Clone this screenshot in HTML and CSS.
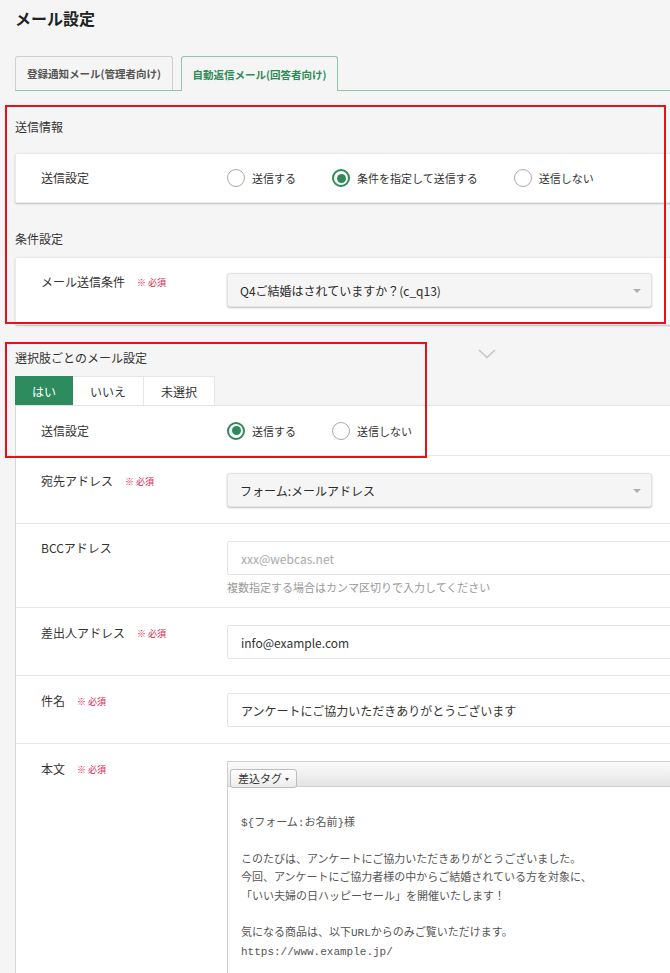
FILE: index.html
```html
<!DOCTYPE html>
<html lang="ja">
<head>
<meta charset="utf-8">
<title>メール設定</title>
<link rel="stylesheet" href="styles.css">
</head>
<body>
<div class="page">
  <h1 class="title">メール設定</h1>
  <div class="tabs">
    <div class="tab">登録通知メール(管理者向け)</div>
    <div class="tab active">自動返信メール(回答者向け)</div>
  </div>

  <h2 class="sec-head sec-first">送信情報</h2>
  <div class="card card-radio">
    <div class="label">送信設定</div>
    <div class="radios">
      <span class="radio"><span class="dot"></span>送信する</span>
      <span class="radio checked"><span class="dot"></span>条件を指定して送信する</span>
      <span class="radio"><span class="dot"></span>送信しない</span>
    </div>
  </div>

  <h2 class="sec-head sec-second">条件設定</h2>
  <div class="card card-field">
    <div class="label">メール送信条件<span class="req">※ 必須</span></div>
    <div class="field">
      <div class="select">Q4ご結婚はされていますか？(c_q13)<span class="caret"></span></div>
    </div>
  </div>

  <div class="sec-head-row">
    <h2 class="sec-head">選択肢ごとのメール設定</h2>
    <svg class="chevron" width="18" height="10" viewBox="0 0 18 10"><polyline points="1,1 9,8.5 17,1" fill="none" stroke="#c4c4c4" stroke-width="1.4"/></svg>
  </div>
  <div class="choice-tabs">
    <div class="ctab on">はい</div>
    <div class="ctab">いいえ</div>
    <div class="ctab">未選択</div>
  </div>

  <div class="panel">
    <div class="row row-radio">
      <div class="label">送信設定</div>
      <div class="radios">
        <span class="radio checked"><span class="dot"></span>送信する</span>
        <span class="radio"><span class="dot"></span>送信しない</span>
      </div>
    </div>
    <div class="row">
      <div class="label">宛先アドレス<span class="req">※ 必須</span></div>
      <div class="field">
        <div class="select">フォーム:メールアドレス<span class="caret"></span></div>
      </div>
    </div>
    <div class="row row-bcc">
      <div class="label">BCCアドレス</div>
      <div class="field">
        <div class="input placeholder">xxx@webcas.net</div>
        <div class="help">複数指定する場合はカンマ区切りで入力してください</div>
      </div>
    </div>
    <div class="row">
      <div class="label">差出人アドレス<span class="req">※ 必須</span></div>
      <div class="field">
        <div class="input">info@example.com</div>
      </div>
    </div>
    <div class="row">
      <div class="label">件名<span class="req">※ 必須</span></div>
      <div class="field">
        <div class="input">アンケートにご協力いただきありがとうございます</div>
      </div>
    </div>
    <div class="row row-body">
      <div class="label">本文<span class="req">※ 必須</span></div>
      <div class="field">
        <div class="editor">
          <div class="toolbar"><span class="tool-btn">差込タグ<span class="tool-caret"></span></span></div>
          <div class="editor-body">
            <div class="line">${フォーム:お名前}様</div>
            <div class="line">&nbsp;</div>
            <div class="line">このたびは、アンケートにご協力いただきありがとうございました。</div>
            <div class="line">今回、アンケートにご協力者様の中からご結婚されている方を対象に、</div>
            <div class="line">「いい夫婦の日ハッピーセール」を開催いたします！</div>
            <div class="line">&nbsp;</div>
            <div class="line">気になる商品は、以下URLからのみご覧いただけます。</div>
            <div class="line">https://www.example.jp/</div>
            <div class="line">&nbsp;</div>
          </div>
        </div>
      </div>
    </div>
  </div>
</div>
<div class="mark mark-1"></div>
<div class="mark mark-2"></div>
</body>
</html>
```

FILE: styles.css
```css
html, body {
  margin: 0;
  padding: 0;
  height: 973px;
  overflow: hidden;
  background: #f5f5f5;
}
body {
  position: relative;
  font-family: "Noto Sans CJK JP", "Noto Sans", sans-serif;
  color: #333;
}
.page {
  width: 700px;
  padding: 6px 0 0 15px;
}
.title {
  margin: 0;
  font-size: 16px;
  line-height: 24px;
  font-weight: 700;
  color: #222;
}
.tabs {
  display: flex;
  gap: 8px;
  margin-top: 26px;
  height: 34px;
  border-bottom: 1px solid #8fc6a8;
}
.tab {
  box-sizing: border-box;
  width: 158px;
  height: 34px;
  border: 1px solid #cfcfcf;
  border-bottom: none;
  border-radius: 3px 3px 0 0;
  display: flex;
  align-items: center;
  justify-content: center;
  font-size: 10.5px;
  font-weight: 700;
  color: #555;
}
.tab.active {
  width: 157px;
  height: 35px;
  border-color: #8fc6a8;
  background: #f5f5f5;
  color: #2e8b57;
}
.sec-head {
  margin: 0;
  font-size: 12px;
  line-height: 18px;
  font-weight: 400;
  color: #333;
}
.sec-first { margin-top: 27px; }
.sec-second { margin-top: 27px; }
.card {
  box-sizing: border-box;
  background: #fff;
  border: 1px solid #e9e9e9;
  border-radius: 2px;
  box-shadow: 0 1px 2px rgba(0, 0, 0, 0.22);
  display: flex;
  padding-left: 25px;
}
.card-radio {
  margin-top: 17px;
  height: 50px;
  align-items: center;
}
.card-field {
  margin-top: 9px;
  padding-top: 15px;
  padding-bottom: 17px;
  align-items: flex-start;
}
.label {
  flex: none;
  width: 186px;
  font-size: 12px;
  line-height: 18px;
  color: #333;
  display: flex;
  align-items: center;
}
.card-field .label { margin-top: -1px; }
.req {
  margin-left: 12px;
  font-size: 9px;
  color: #d81b4b;
  padding-top: 2px;
}
.radios {
  display: flex;
  align-items: center;
  gap: 36px;
}
.radio {
  display: flex;
  align-items: center;
  gap: 7px;
  font-size: 11px;
  line-height: 18px;
  color: #333;
}
.dot {
  box-sizing: border-box;
  width: 18px;
  height: 18px;
  border: 1px solid #a9a9a9;
  border-radius: 50%;
  background: #fff;
  display: flex;
  align-items: center;
  justify-content: center;
}
.radio.checked .dot {
  border: 2px solid #2e8b57;
}
.radio.checked .dot::after {
  content: "";
  width: 9px;
  height: 9px;
  border-radius: 50%;
  background: #2e8b57;
}
.field {
  flex: 1;
  min-width: 0;
}
.select {
  box-sizing: border-box;
  position: relative;
  width: 425px;
  height: 34px;
  padding-left: 12px;
  background: #f5f5f5;
  border: 1px solid #e2e2e2;
  border-radius: 3px;
  box-shadow: 0 1px 2px rgba(0, 0, 0, 0.25);
  display: flex;
  align-items: center;
  font-size: 12px;
  color: #2b2b2b;
}
.caret {
  position: absolute;
  right: 10px;
  top: 15px;
  width: 0;
  height: 0;
  border-left: 4px solid transparent;
  border-right: 4px solid transparent;
  border-top: 4px solid #b0b0b0;
}
.sec-head-row {
  position: relative;
  margin-top: 24px;
}
.chevron {
  position: absolute;
  left: 463px;
  top: 0;
}
.choice-tabs {
  display: flex;
  margin-top: 9px;
  height: 29px;
}
.ctab {
  box-sizing: border-box;
  height: 29px;
  width: 71px;
  background: #fff;
  border: 1px solid #e6e6e6;
  border-bottom: none;
  display: flex;
  align-items: center;
  justify-content: center;
  font-size: 12px;
  color: #333;
}
.ctab + .ctab { border-left: none; }
.ctab.on {
  width: 58px;
  background: #2e8b5e;
  border-color: #2e8b5e;
  color: #fff;
}
.panel {
  background: #fff;
  border-left: 1px solid #d8d8d8;
  border-top: 1px solid #e4e4e4;
}
.row {
  display: flex;
  align-items: flex-start;
  padding: 17px 0 16px 25px;
  border-bottom: 1px solid #e8e8e8;
}
.row .label { margin-top: -2px; }
.row-radio {
  height: 49px;
  padding-top: 0;
  padding-bottom: 0;
  align-items: center;
}
.row-radio .label { margin-top: 0; }
.row-bcc { padding-bottom: 13px; }
.input {
  box-sizing: border-box;
  height: 34px;
  padding-left: 13px;
  background: #fff;
  border: 1px solid #e4e4e4;
  border-radius: 2px;
  display: flex;
  align-items: center;
  font-size: 12px;
  color: #333;
}
.input.placeholder { color: #aaa; }
.help {
  margin-top: 5px;
  font-size: 11px;
  line-height: 14px;
  color: #999;
}
.editor {
  border: 1px solid #cfcfcf;
  background: #fff;
}
.toolbar {
  box-sizing: border-box;
  height: 25px;
  background: linear-gradient(#fbfbfb, #e4e4e4);
  border-bottom: 1px solid #cfcfcf;
  padding: 2px 0 0 2px;
}
.tool-btn {
  box-sizing: border-box;
  display: inline-flex;
  align-items: center;
  width: 67px;
  height: 19px;
  padding-left: 7px;
  border: 1px solid #bdbdbd;
  border-radius: 3px;
  background: linear-gradient(#ffffff, #ececec);
  font-size: 11px;
  color: #333;
  position: relative;
}
.tool-caret {
  position: absolute;
  right: 7px;
  top: 8px;
  width: 0;
  height: 0;
  border-left: 2.5px solid transparent;
  border-right: 2.5px solid transparent;
  border-top: 3px solid #444;
}
.editor-body {
  padding: 27px 0 0 13px;
  font-family: "Liberation Mono", "Noto Sans CJK JP", monospace;
  font-size: 11px;
  line-height: 18.4px;
  color: #555;
}
.line { white-space: nowrap; }
.mark {
  position: absolute;
  box-sizing: border-box;
  border: 2px solid #e8101a;
}
.mark-1 {
  left: 5px;
  top: 105px;
  width: 661px;
  height: 219px;
}
.mark-2 {
  left: 5px;
  top: 342px;
  width: 422px;
  height: 116px;
}
```
